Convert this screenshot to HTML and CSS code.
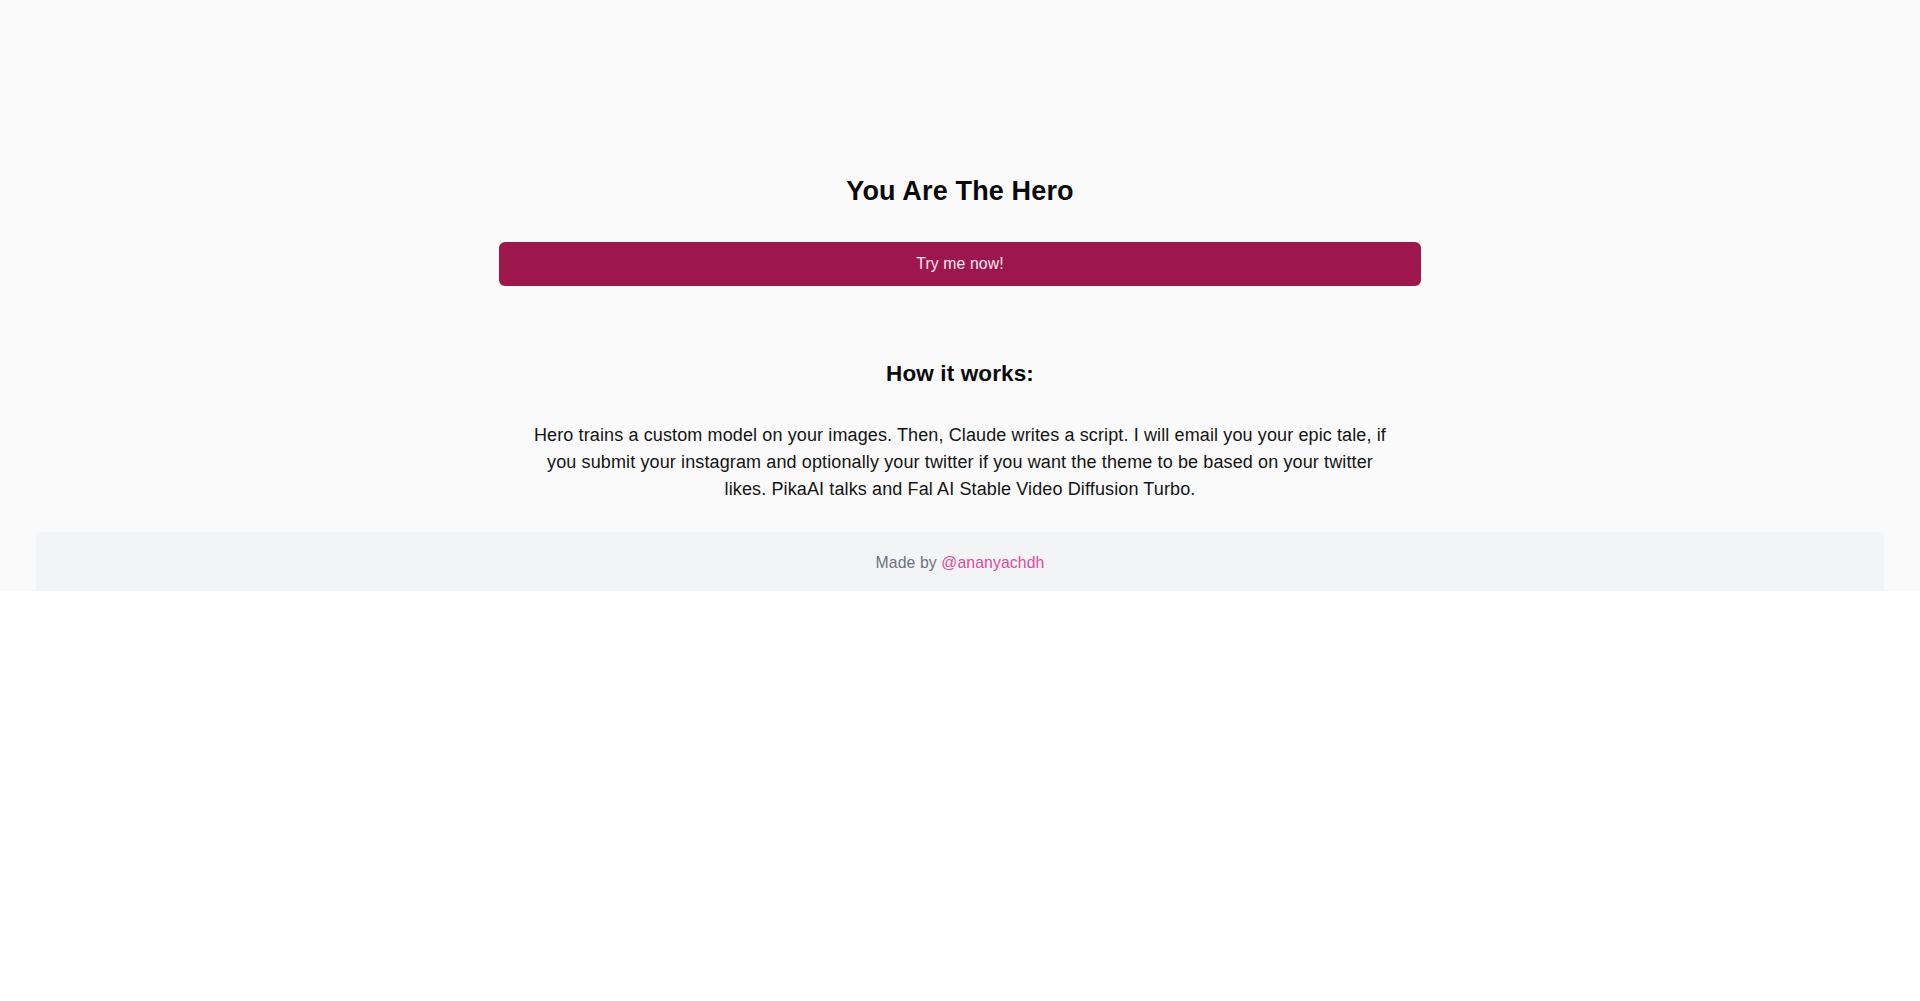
FILE: index.html
```html
<!DOCTYPE html>
<html lang="en">
<head>
<meta charset="utf-8">
<title>You Are The Hero</title>
<link rel="stylesheet" href="styles.css">
</head>
<body>
<div class="page">
  <main class="hero">
    <h1 class="title">You Are The Hero</h1>
    <a class="cta" href="#">Try me now!</a>
    <h2 class="subtitle">How it works:</h2>
    <p class="desc">Hero trains a custom model on your images. Then, Claude writes a script. I will email you your epic tale, if you submit your instagram and optionally your twitter if you want the theme to be based on your twitter likes. PikaAI talks and Fal AI Stable Video Diffusion Turbo.</p>
  </main>
  <footer class="footer">Made by <a class="footer-link" href="#">@ananyachdh</a></footer>
</div>
</body>
</html>
```
FILE: styles.css
```css
html, body {
  margin: 0;
  padding: 0;
  background: #ffffff;
}
body {
  font-family: "Liberation Sans", Arial, sans-serif;
  color: #111111;
  letter-spacing: 0.12px;
}
.page {
  background: #fafafa;
  padding: 173px 36px 0;
  display: flex;
  flex-direction: column;
  align-items: center;
}
.hero {
  display: flex;
  flex-direction: column;
  align-items: center;
}
.title {
  margin: 0;
  font-size: 27px;
  line-height: 36px;
  font-weight: 700;
  color: #0a0a0a;
  letter-spacing: 0.15px;
}
.cta {
  display: block;
  box-sizing: border-box;
  margin-top: 33px;
  width: 922px;
  padding: 10px 0 11px;
  background: #9d174d;
  border-radius: 6px;
  color: #fce7f3;
  font-size: 15.75px;
  line-height: 23px;
  text-align: center;
  text-decoration: none;
}
.subtitle {
  margin: 72px 0 0;
  font-size: 22.5px;
  line-height: 31.5px;
  font-weight: 700;
  color: #0a0a0a;
}
.desc {
  margin: 32px 0 0;
  width: 858px;
  font-size: 18px;
  line-height: 27px;
  text-align: center;
  color: #141414;
}
.footer {
  align-self: stretch;
  margin-top: 30px;
  padding: 18px 0 17px;
  background: #f3f4f6;
  box-shadow: 0 -1px 3px rgba(0, 0, 0, 0.02);
  text-align: center;
  font-size: 15.75px;
  line-height: 23px;
  color: #6b7280;
}
.footer-link {
  color: #e0499a;
  text-decoration: none;
}
```
